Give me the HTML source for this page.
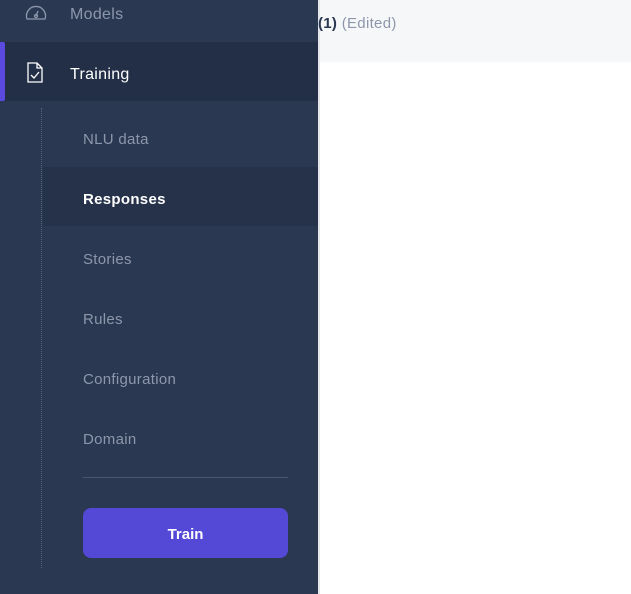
<!DOCTYPE html><html><head><style>
body{margin:0;width:631px;height:594px;overflow:hidden;background:#fff;font-family:"Liberation Sans",sans-serif;position:relative}
.sb{position:absolute;left:0;top:0;width:318px;height:594px;background:#2b3852}
.edge{position:absolute;left:318px;top:0;width:2px;height:594px;background:#e4e6ea}
.hdr{position:absolute;left:320px;top:0;width:311px;height:62px;background:#f6f7f8}
.t{position:absolute;font-size:15px;color:#8d97ab;letter-spacing:.3px}
</style></head><body>
<div class="sb">
<svg style="position:absolute;left:25px;top:2px" width="22" height="19" viewBox="0 0 22 19" fill="none" stroke="#8d97ab" stroke-width="1.3"><path d="M2 17 A9.5 9.5 0 1 1 20 17 Z"/><circle cx="11" cy="14" r="1.5"/><path d="M11 14 L13 9"/></svg>
<div class="t" style="left:70px;top:6px;font-size:16px">Models</div>
<div style="position:absolute;left:0;top:42px;width:318px;height:59px;background:#232f46"></div>
<div style="position:absolute;left:0;top:42px;width:5px;height:59px;background:#5a4ae0;border-radius:0 2px 2px 0"></div>
<svg style="position:absolute;left:26px;top:62px" width="18" height="22" viewBox="0 0 18 22" fill="none" stroke="#fff" stroke-width="1.3"><path d="M2 1 H11 L16 6 V20 H2 Z M11 1 V6 H16"/><path d="M5 13 L8 16 L13 10"/></svg>
<div class="t" style="left:70px;top:66px;font-size:16px;color:#fff">Training</div>
<div style="position:absolute;left:41px;top:108px;height:460px;border-left:1px dotted #56627a"></div>
<div style="position:absolute;left:43px;top:167px;width:275px;height:59px;background:#263249"></div>
<div class="t" style="left:83px;top:131px">NLU data</div>
<div class="t" style="left:83px;top:191px;color:#fff;font-weight:bold">Responses</div>
<div class="t" style="left:83px;top:251px">Stories</div>
<div class="t" style="left:83px;top:311px">Rules</div>
<div class="t" style="left:83px;top:371px">Configuration</div>
<div class="t" style="left:83px;top:431px">Domain</div>
<div style="position:absolute;left:83px;top:477px;width:205px;height:1px;background:#4a5670"></div>
<div style="position:absolute;left:83px;top:508px;width:205px;height:50px;background:#5349d6;border-radius:8px;color:#fff;font-weight:bold;font-size:15px;text-align:center;line-height:54px">Train</div>
</div>
<div class="edge"></div>
<div class="hdr"></div>
<div style="position:absolute;left:318px;top:15px;font-size:15px;color:#2b3852;letter-spacing:.3px"><b>(1)</b> <span style="color:#8d97ab">(Edited)</span></div>
</body></html>
